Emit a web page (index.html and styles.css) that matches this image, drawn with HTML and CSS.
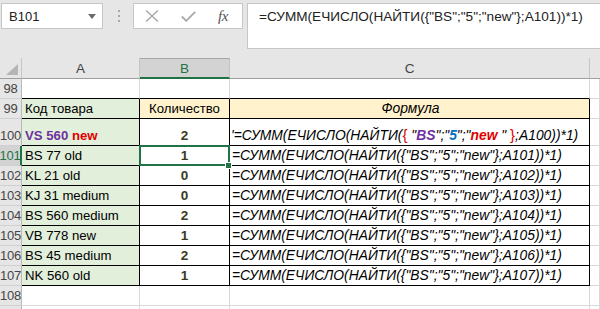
FILE: index.html
```html
<!DOCTYPE html>
<html lang="ru">
<head>
<meta charset="utf-8">
<title>Excel</title>
<link rel="stylesheet" href="styles.css">
</head>
<body>
<div class="toolbar">
  <div class="namebox">
    <span class="nb-text">B101</span>
    <svg class="nb-arrow" width="8" height="5" viewBox="0 0 8 5"><path d="M0 0H8L4 5Z" fill="#6b6b6b"/></svg>
  </div>
  <div class="grip">
    <svg width="3" height="12" viewBox="0 0 3 12"><rect x="0" y="0" width="2" height="2" fill="#a8a8a8"/><rect x="0" y="5" width="2" height="2" fill="#a8a8a8"/><rect x="0" y="10" width="2" height="2" fill="#a8a8a8"/></svg>
  </div>
  <div class="fxbox">
    <svg class="ic" width="14" height="12" viewBox="0 0 14 12"><path d="M1 0.5L13 11.5M13 0.5L1 11.5" stroke="#a9a9a9" stroke-width="1.4" fill="none"/></svg>
    <svg class="ic" width="15" height="11" viewBox="0 0 15 11"><path d="M0.8 5.5L5.2 9.8L14.2 0.8" stroke="#a9a9a9" stroke-width="1.8" fill="none"/></svg>
    <span class="fx">fx</span>
  </div>
  <div class="fbar">=СУММ(ЕЧИСЛО(НАЙТИ({"BS";"5";"new"};A101))*1)</div>
</div>
<div class="sheet">
  <div class="corner"><svg width="21" height="20" viewBox="0 0 21 20"><path d="M18 6V17H6Z" fill="#b5b5b5"/></svg></div>
  <div class="ch">A</div>
  <div class="ch ch-sel">B</div>
  <div class="ch">C</div>
  <div class="ch ch-last"></div>

  <div class="rh">98</div>
  <div class="c top"></div><div class="c top"></div><div class="c top"></div><div class="c"></div>

  <div class="rh">99</div>
  <div class="c t ga">Код товара</div>
  <div class="c t oy ctr">Количество</div>
  <div class="c t oy ctr it">Формула</div>
  <div class="c"></div>

  <div class="rh">100</div>
  <div class="c t ga"><b class="pu">VS 560</b>&nbsp;<b class="rd">new</b></div>
  <div class="c t ctr num">2</div>
  <div class="c t it f100">'=СУММ(ЕЧИСЛО(НАЙТИ(<span class="rd up">{</span>&nbsp;"<b class="pu">BS</b>";"<b class="bl">5</b>";"<b class="rd">new</b>&nbsp;"&nbsp;<span class="rd up">}</span>;A100))*1)</div>
  <div class="c"></div>

  <div class="rh rh-sel">101</div>
  <div class="c t ga">BS 77 old</div>
  <div class="c t ctr num sel">1</div>
  <div class="c t it">=СУММ(ЕЧИСЛО(НАЙТИ({"BS";"5";"new"};A101))*1)</div>
  <div class="c"></div>

  <div class="rh">102</div>
  <div class="c t ga">KL 21 old</div>
  <div class="c t ctr num">0</div>
  <div class="c t it">=СУММ(ЕЧИСЛО(НАЙТИ({"BS";"5";"new"};A102))*1)</div>
  <div class="c"></div>

  <div class="rh">103</div>
  <div class="c t ga">KJ 31 medium</div>
  <div class="c t ctr num">0</div>
  <div class="c t it">=СУММ(ЕЧИСЛО(НАЙТИ({"BS";"5";"new"};A103))*1)</div>
  <div class="c"></div>

  <div class="rh">104</div>
  <div class="c t ga">BS 560 medium</div>
  <div class="c t ctr num">2</div>
  <div class="c t it">=СУММ(ЕЧИСЛО(НАЙТИ({"BS";"5";"new"};A104))*1)</div>
  <div class="c"></div>

  <div class="rh">105</div>
  <div class="c t ga">VB 778 new</div>
  <div class="c t ctr num">1</div>
  <div class="c t it">=СУММ(ЕЧИСЛО(НАЙТИ({"BS";"5";"new"};A105))*1)</div>
  <div class="c"></div>

  <div class="rh">106</div>
  <div class="c t ga">BS 45 medium</div>
  <div class="c t ctr num">2</div>
  <div class="c t it">=СУММ(ЕЧИСЛО(НАЙТИ({"BS";"5";"new"};A106))*1)</div>
  <div class="c"></div>

  <div class="rh">107</div>
  <div class="c t ga">NK 560 old</div>
  <div class="c t ctr num">1</div>
  <div class="c t it">=СУММ(ЕЧИСЛО(НАЙТИ({"BS";"5";"new"};A107))*1)</div>
  <div class="c"></div>

  <div class="rh">108</div>
  <div class="c"></div><div class="c"></div><div class="c"></div><div class="c"></div>

  <div class="rh rh-end"></div>
  <div class="c c-end"></div><div class="c c-end"></div><div class="c c-end"></div><div class="c c-end"></div>
</div>
</body>
</html>
```

FILE: styles.css
```css
html, body {
  margin: 0;
  padding: 0;
}
body {
  width: 600px;
  height: 309px;
  overflow: hidden;
  background: #ffffff;
  font-family: "Liberation Sans", Arial, sans-serif;
  color: #000;
}

/* ---------- toolbar ---------- */
.toolbar {
  height: 58px;
  box-sizing: border-box;
  background: #e6e6e6;
  display: flex;
  align-items: flex-start;
  padding: 3px 0 0 1px;
}
.namebox {
  width: 102px;
  height: 26px;
  box-sizing: border-box;
  background: #fff;
  border: 1px solid #c6c6c6;
  display: flex;
  align-items: center;
  justify-content: space-between;
  padding: 0 6px 0 7px;
  font-size: 13px;
  color: #222;
}
.grip {
  width: 30px;
  height: 26px;
  display: flex;
  align-items: center;
  justify-content: center;
  padding-left: 2px;
  box-sizing: border-box;
}
.fxbox {
  width: 110px;
  height: 26px;
  box-sizing: border-box;
  background: #fff;
  border: 1px solid #c6c6c6;
  display: flex;
  align-items: center;
  padding-left: 11px;
  gap: 22px;
}
.fx {
  font-family: "Liberation Serif", "Times New Roman", serif;
  font-style: italic;
  font-size: 15px;
  color: #555;
  margin-left: 0;
  letter-spacing: -0.5px;
}
.fbar {
  margin-left: 4px;
  flex: 1;
  height: 46px;
  box-sizing: border-box;
  background: #fff;
  border: 1px solid #c6c6c6;
  border-right: none;
  padding: 5px 0 0 11px;
  font-size: 13.6px;
  color: #222;
  white-space: nowrap;
}

/* ---------- sheet ---------- */
.sheet {
  display: grid;
  grid-template-columns: 22px 118px 90px 360px 10px;
  grid-template-rows: 21px 20px 20px 27px 20px 20px 20px 20px 20px 20px 20px 20px 4px;
}
.sheet > div {
  box-sizing: border-box;
  min-width: 0;
}
.corner {
  background: #e6e6e6;
  border-right: 1px solid #c4c4c4;
  border-bottom: 1px solid #9e9e9e;
  display: flex;
}
.ch {
  background: #e6e6e6;
  border-right: 1px solid #c4c4c4;
  border-bottom: 1px solid #9e9e9e;
  display: flex;
  align-items: center;
  justify-content: center;
  font-size: 13.5px;
  color: #444;
  padding-top: 1px;
}
.ch-sel {
  background: #d3d3d3;
  color: #217346;
  border-top: 1px solid #a6a6a6;
  border-bottom: 2px solid #217346;
}
.ch-last {
  border-right: none;
}
.rh {
  background: #e6e6e6;
  border-right: 1px solid #b9b9b9;
  border-bottom: 1px solid #d0d0d0;
  display: flex;
  align-items: flex-end;
  justify-content: center;
  font-size: 13px;
  color: #444;
  padding-bottom: 2px;
  letter-spacing: -0.3px;
}
.rh-sel {
  background: #d3d3d3;
  color: #217346;
  border-right: 2px solid #217346;
}
.rh-end, .c-end {
  border-bottom: none;
  padding: 0;
}
.c {
  border-right: 1px solid #d9d9d9;
  border-bottom: 1px solid #d9d9d9;
  display: flex;
  align-items: flex-end;
  padding: 0 0 2px 3px;
  font-size: 13.2px;
  white-space: nowrap;
  overflow: visible;
}
.c.c-end {
  border-bottom: none;
  padding: 0;
}
.c.top {
  border-bottom-color: #000;
}
.c.t {
  border-right-color: #000;
  border-bottom-color: #000;
}
.ga { background: #e2efda; }
.oy { background: #fff2cc; }
.ctr { justify-content: center; padding-left: 0; }
.it {
  font-style: italic;
  font-size: 13.85px;
  padding-left: 2px;
}
.num {
  font-weight: bold;
  color: #3a3a1e;
  font-size: 13.5px;
}
.pu { color: #7030a0; }
.rd { color: #e00000; }
.bl { color: #0070c0; }
.up { font-style: normal; font-size: 15px; }
.f100 b { font-weight: bold; }
.f100 { padding-left: 1px; }

.sel {
  position: relative;
}
.sel::before {
  content: "";
  position: absolute;
  left: -1px;
  top: -1px;
  width: 91px;
  height: 21px;
  box-sizing: border-box;
  border: 2px solid #217346;
}
.sel::after {
  content: "";
  position: absolute;
  left: 85px;
  top: 16px;
  width: 5px;
  height: 5px;
  background: #217346;
  border: 1px solid #fff;
}
```
